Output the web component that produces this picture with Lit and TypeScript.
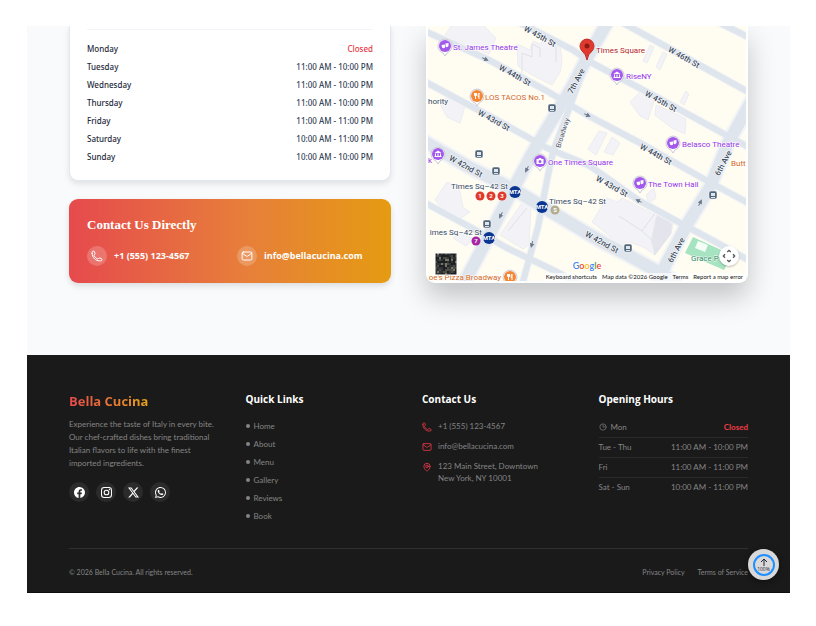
import { LitElement, html, css, svg } from "lit";
import { customElement } from "lit/decorators.js";

const handset = svg`<path d="M2.25 6.75c0 8.284 6.716 15 15 15h2.25a2.25 2.25 0 0 0 2.25-2.25v-1.372c0-.516-.351-.966-.852-1.091l-4.423-1.106c-.44-.11-.902.055-1.173.417l-.97 1.293c-.282.376-.769.542-1.21.38a12.035 12.035 0 0 1-7.143-7.143c-.162-.441.004-.928.38-1.21l1.293-.97c.363-.271.527-.734.417-1.173L6.963 3.102a1.125 1.125 0 0 0-1.091-.852H4.5A2.25 2.25 0 0 0 2.25 4.5v2.25Z"/>`;
const envelope = svg`<rect x="2.25" y="4" width="19.5" height="16" rx="2.25"/><path d="m2.5 6.5 8.3 5.8a2.2 2.2 0 0 0 2.4 0l8.3-5.8"/>`;
const pin = svg`<path d="M15 10.5a3 3 0 1 1-6 0 3 3 0 0 1 6 0Z"/><path d="M19.5 10.5c0 7.142-7.5 11.25-7.5 11.25S4.500 17.642 4.500 10.500a7.500 7.500 0 1 1 15 0Z"/>`;
const clock = svg`<circle cx="12" cy="12" r="9.500"/><path d="M12 6v6h4.500"/>`;

const lineIcon = (shape: unknown) => html`
  <svg class="line-icon" viewBox="0 0 24 24" aria-hidden="true">${shape}</svg>`;

const facebook = svg`<path d="M16 8.049c0-4.446-3.582-8.050-8-8.050C3.580 0-.002 3.603-.002 8.050c0 4.017 2.926 7.347 6.750 7.951v-5.625h-2.030V8.050H6.750V6.275c0-2.017 1.195-3.131 3.022-3.131.876 0 1.791.157 1.791.157v1.980h-1.009c-.993 0-1.303.621-1.303 1.258v1.510h2.218l-.354 2.326H9.250V16c3.824-.604 6.750-3.934 6.750-7.951"/>`;
const instagram = svg`<g fill="none" stroke="currentColor" stroke-width="1.5"><rect x=".75" y=".75" width="14.5" height="14.5" rx="4"/><circle cx="8" cy="8" r="3.400"/></g><circle cx="12.300" cy="3.700" r="1"/>`;
const xLogo = svg`<path d="M12.600.750h2.454l-5.360 6.142L16 15.250h-4.937l-3.867-5.070-4.425 5.070H.316l5.733-6.570L0 .750h5.063l3.495 4.633L12.601.750Zm-.860 13.028h1.360L4.323 2.145H2.865z"/>`;
const whatsapp = svg`<path d="M13.601 2.326A7.850 7.850 0 0 0 7.994 0C3.627 0 .068 3.558.064 7.926c0 1.399.366 2.760 1.057 3.965L0 16l4.204-1.102a7.900 7.900 0 0 0 3.790.965h.004c4.368 0 7.926-3.558 7.930-7.930A7.900 7.900 0 0 0 13.600 2.326zM7.994 14.521a6.600 6.600 0 0 1-3.356-.920l-.240-.144-2.494.654.666-2.433-.156-.251a6.560 6.560 0 0 1-1.007-3.505c0-3.626 2.957-6.584 6.591-6.584a6.560 6.560 0 0 1 4.660 1.931 6.560 6.560 0 0 1 1.928 4.660c-.004 3.639-2.961 6.592-6.592 6.592m3.615-4.934c-.197-.099-1.170-.578-1.353-.646-.182-.065-.315-.099-.445.099-.133.197-.513.646-.627.775-.114.133-.232.148-.430.050-.197-.100-.836-.308-1.592-.985-.590-.525-.985-1.175-1.103-1.372-.114-.198-.011-.304.088-.403.087-.088.197-.232.296-.346.100-.114.133-.198.198-.330.065-.134.034-.248-.015-.347-.050-.099-.445-1.076-.612-1.470-.160-.389-.323-.335-.445-.340-.114-.007-.247-.007-.380-.007a.730.730 0 0 0-.529.247c-.182.198-.691.677-.691 1.654s.710 1.916.810 2.049c.098.133 1.394 2.132 3.383 2.992.470.205.840.326 1.129.418.475.152.904.129 1.246.080.380-.058 1.171-.480 1.338-.943.164-.464.164-.860.114-.992-.049-.133-.182-.198-.380-.297"/>`;

/* ---- street map ---- */

const side = [
  "420,29 487,59 547,91 587,115 642,144 702,178 750,204",
  "498,12 538,32 573,50 592,63 662,100 750,148",
  "600,10 623,23 685,57 750,93",
  "700,13 750,38",
  "420,79 495,119 547,148 590,166 638,200 682,224 712,240 750,261",
  "420,200 483,234 507,248 553,270 580,284",
  "590,50 576,90 553,152 548,175 538,227 522,285",
];
const wide = [
  "420,139 467,166 515,190 543,207 602,242 628,255 680,284",
  "612,14 588,56 572,87 560,107 533,152 503,208 483,247 463,285",
  "752,100 728,143 710,187 685,228 655,285",
];
const buildings = [
  "518,66 517,44 530,50 533,41 540,44 548,36 560,43 562,62 560,72 552,85 532,75",
  "440,104 447,97 465,106 460,123 447,117",
  "440,42 452,25 482,24 496,38 489,54 470,46",
  "435,200 447,182 459,187 463,207 470,212 455,222",
  "453,238 460,232 474,239 466,246",
  "500,235 524,200 531,207 529,245 523,249",
  "592,222 607,198 617,202 622,198 673,224 671,234 655,255 645,248 630,242 620,244",
  "630,102 640,92 654,101 648,120 640,116",
  "656,105 672,112 686,119 685,134 672,128 655,115",
  "588,149 599,131 607,133 596,155",
  "604,152 612,137 620,143 613,155",
  "643,61 650,45 654,47 647,63",
  "656,67 663,52 667,54 660,70",
  "680,102 686,91 689,94 684,105",
  "646,195 654,188 656,198 649,203",
];

const streetNames: [string, number, number, number][] = [
  ["W 45th St", 540, 36, 29],
  ["W 46th St", 684, 57, 30],
  ["W 44th St", 515, 75, 29],
  ["W 45th St", 661, 101, 29],
  ["W 43rd St", 494, 120, 29],
  ["W 44th St", 656, 154, 29],
  ["W 42nd St", 466, 166, 29],
  ["W 43rd St", 612, 186, 29],
  ["W 42nd St", 602, 242, 29],
  ["7th Ave", 576, 81, -62],
  ["6th Ave", 723, 163, -62],
  ["6th Ave", 676, 250, -62],
];

const places: [string, number, number, string, string][] = [
  ["St. James Theatre", 453, 50, "violet", "start"],
  ["Times Square", 596, 53, "crimson", "start"],
  ["RiseNY", 626, 79, "violet", "start"],
  ["LOS TACOS No.1", 485, 100, "amber", "start"],
  ["Belasco Theatre", 682, 147, "violet", "start"],
  ["One Times Square", 548, 165, "violet", "start"],
  ["The Town Hall", 648, 187, "violet", "start"],
  ["Butt", 731, 166, "amber", "start"],
  ["oe's Pizza Broadway", 501, 280, "amber", "end"],
  ["Grace P", 691, 261, "green", "start"],
  ["hority", 428, 104, "slate", "start"],
  ["k", 428, 163, "violet", "start"],
  ["Times Sq–42 St", 451, 189, "slate", "start"],
  ["Times Sq–42 St", 549, 204, "slate", "start"],
  ["imes Sq–42 St", 482, 235, "slate", "end"],
];

const pins: [number, number, string, string][] = [
  [445, 46, "violet", "mask"],
  [617, 75, "violet", "hall"],
  [477, 96, "amber", "fork"],
  [673, 143, "violet", "mask"],
  [438, 154, "violet", "hall"],
  [540, 161, "violet", "camera"],
  [640, 183, "violet", "mask"],
  [510, 277, "amber", "fork"],
];

const glyphs: Record<string, unknown> = {
  mask: svg`<path fill="#fff" d="M-3.500 -1 0 -1.500V1.500Q-1.500 3-3 1.500ZM.5-2.500 3.500-3V0Q2 2 .5 .5Z"/>`,
  hall: svg`<path fill="#fff" d="M-3.500-1 0-3.500 3.500-1ZM-3-.5H-2V2H-3ZM-.5-.5H.5V2H-.5ZM2-.5H3V2H2ZM-3.500 2H3.500V3H-3.500Z"/>`,
  fork: svg`<path fill="none" stroke="#fff" d="M-2.500-3V-.5H-.5V-3M-1.500-3V3M2 3V-3Q.8-1.500 1 .5H2"/>`,
  camera: svg`<path fill="#fff" fill-rule="evenodd" d="M-3.500-2H-1.500L-1-3H1L1.500-2H3.500V3H-3.500ZM1.500 .5A1.500 1.500 0 1 0-1.500 .5 1.500 1.500 0 1 0 1.500 .5"/>`,
};

const stations = [[552, 108], [479, 154], [496, 171], [487, 224], [713, 195], [628, 248]];
const hubs = [[515, 192], [542, 207], [489, 238]];
const trains: [string, number, number, string][] = [
  ["1", 480, 196, "#e0392d"],
  ["2", 491, 196, "#e0392d"],
  ["3", 502, 196, "#e0392d"],
  ["7", 476, 241, "#a626a4"],
  ["S", 555, 210, "#b3ad8f"],
];
const arrows = [[485, 59, 25], [587, 115, 25], [527, 169, 118], [501, 215, 118], [532, 244, 105], [639, 201, 207], [700, 203, -62]];

const speckles = Array.from({ length: 121 }, (_, i) => {
  const tone = (i * i * 37 + i * 91 + ((i * 7) % 11) * 23) % 97;
  return svg`<rect x=${435 + (i % 11) * 2} y=${253 + Math.floor(i / 11) * 2} width="2" height="2"
    fill=${tone > 86 ? "#77756a" : tone > 64 ? "#4a4b45" : tone > 34 ? "#303234" : "#1d2022"} />`;
});

@customElement("street-map")
class StreetMap extends LitElement {
  static styles = css`
    :host { display: block; position: relative; font-family: Roboto, "Liberation Sans", sans-serif; }
    .canvas { display: block; width: 100%; background: #fffdf1; }
    .edge { fill: none; stroke: #f1f3f6; }
    .road { fill: none; stroke: #dfe5ed; }
    .narrow.edge { stroke-width: 8; }
    .narrow.road { stroke-width: 6; }
    .broad.edge { stroke-width: 16; }
    .broad.road { stroke-width: 12; }
    .building { fill: #f3f3f7; stroke: #ececf2; }
    .street { font-size: 8px; font-weight: 500; fill: #3e4e61; text-anchor: middle; }
    .place { font-size: 8px; }
    .street, .place { paint-order: stroke; stroke: #fff; stroke-width: 1px; }
    .minor { font-size: 7px; font-weight: 400; }
    .violet { fill: #9334e6; }
    .amber { fill: #d2691e; }
    .crimson { fill: #b3261e; }
    .green { fill: #2b8a5b; }
    .slate { fill: #35495e; }
    .dot.violet { fill: #a259ec; }
    .dot.amber { fill: #f58634; }
    .badge { font-size: 6px; font-weight: 700; fill: #fff; text-anchor: middle; }
    .legal {
      position: absolute; right: 0; bottom: 0; display: flex; gap: 5px;
      padding: 0 3px 0 2px; font: 6px/8px Lato, sans-serif;
      background: rgba(255, 255, 255, 0.7); color: #111; white-space: nowrap;
    }
    .legal a, .legal button {
      all: unset; cursor: pointer; color: #111;
    }
    .google {
      position: absolute; left: 50%; bottom: 9px; transform: translateX(-50%);
      font: 600 9px/12px Lato, sans-serif; text-shadow: 0 0 1px #fff;
    }
    .blue { color: #4285f4; }
    .red { color: #ea4335; }
    .yellow { color: #fbbc05; }
    .lime { color: #34a853; }
    .camera {
      position: absolute; right: 7px; bottom: 15px; width: 20px; height: 20px;
      border: 0; padding: 0; border-radius: 50%; background: #fff;
      display: grid; place-items: center;
      box-shadow: 0 1px 2px rgba(0, 0, 0, 0.25);
    }
    .camera svg { width: 14px; height: 14px; fill: none; stroke: #555; stroke-width: 1.5; }
  `;

  render() {
    return html`
      <svg class="canvas" viewBox="428 26 318 255" role="img" aria-label="Map of Times Square">
        ${buildings.map((p) => svg`<polygon class="building" points=${p} />`)}
        <path d="M522 73V53l10 4V44l8 4v9M547 40l9 5v17M508 231l19-23M619 216l23 15 14-19M655 255l-2-14 18-11M642 231l11 10" fill="none" stroke="#dfdfe9"/>
        <polygon points="656,217 660,212 672,224 671,234 655,255 651,241" fill="#e4e4ec"/>
        <polygon points="693,237 732,255 724,270 685,253" fill="#a6e3c0"/>
        <polygon points="698,241 708,245 705,252 695,248" fill="#f5fff8"/>
        ${side.map((p) => svg`<polyline class="narrow edge" points=${p} />`)}
        ${wide.map((p) => svg`<polyline class="broad edge" points=${p} />`)}
        ${side.map((p) => svg`<polyline class="narrow road" points=${p} />`)}
        ${wide.map((p) => svg`<polyline class="broad road" points=${p} />`)}
        ${arrows.map(([x, y, a]) => svg`<path transform="translate(${x} ${y}) rotate(${a})" d="M-3 0H2M0-1.500 3 0 0 1.500Z" fill="#6d7b8c" stroke="#6d7b8c"/>`)}
        ${streetNames.map(([t, x, y, a]) => svg`<text class="street" transform="translate(${x} ${y}) rotate(${a})" y="3">${t}</text>`)}
        <text class="street minor" transform="translate(563 133) rotate(-72)" y="2">Broadway</text>
        ${stations.map(([x, y]) => svg`<g transform="translate(${x} ${y})"><rect x="-4" y="-4" width="8" height="8" rx="2" fill="#526679" stroke="#fff" stroke-width=".5"/><rect x="-2" y="-2" width="4" height="3" fill="#dfe6ee"/><path d="M-2 2.500H2" stroke="#dfe6ee"/></g>`)}
        ${pins.map(([x, y, c, g]) => svg`<g transform="translate(${x} ${y})">
          <path d="M0 10Q-1 7-5 5A7 7 0 1 1 5 5Q1 7 0 10Z" fill="#fff" stroke="#c9c9d4"/>
          <circle class="dot ${c}" r="6"/>${glyphs[g]}</g>`)}
        <path d="M587 60Q586 54 582 51A7 7 0 1 1 592 51Q588 54 587 60Z" fill="#e03a2f" stroke="#bd2c24"/>
        <circle cx="587" cy="46" r="2.500" fill="#8c1a14"/>
        ${hubs.map(([x, y]) => svg`<circle cx=${x} cy=${y} r="6" fill="#0a3590"/><text class="badge" x=${x} y=${y + 2}>MTA</text>`)}
        ${trains.map(([t, x, y, c]) => svg`<circle cx=${x} cy=${y} r="4.500" fill=${c}/><text class="badge" x=${x} y=${y + 2}>${t}</text>`)}
        ${places.map(([t, x, y, c, a]) => svg`<text class="place ${c}" x=${x} y=${y} text-anchor=${a}>${t}</text>`)}
        ${speckles}
        <rect x="435" y="253" width="22" height="22" rx="1" fill="none" stroke="#fff"/>
      </svg>
      <div class="google" aria-label="Google"><span class="blue">G</span><span class="red">o</span><span class="yellow">o</span><span class="blue">g</span><span class="lime">l</span><span class="red">e</span></div>
      <button class="camera" aria-label="Map camera controls">
        <svg viewBox="0 0 16 16"><path d="m6 3.500 2-2 2 2M6 12.500l2 2 2-2M3.500 6l-2 2 2 2M12.500 6l2 2-2 2"/></svg>
      </button>
      <div class="legal">
        <button>Keyboard shortcuts</button>
        <span>Map data ©2026 Google</span>
        <a href="#terms">Terms</a>
        <a href="#report">Report a map error</a>
      </div>`;
  }
}

/* ---- page ---- */

const week = [
  ["Monday", "Closed"],
  ["Tuesday", "11:00 AM - 10:00 PM"],
  ["Wednesday", "11:00 AM - 10:00 PM"],
  ["Thursday", "11:00 AM - 10:00 PM"],
  ["Friday", "11:00 AM - 11:00 PM"],
  ["Saturday", "10:00 AM - 11:00 PM"],
  ["Sunday", "10:00 AM - 10:00 PM"],
];
const summary = [
  ["Mon", "Closed"],
  ["Tue - Thu", "11:00 AM - 10:00 PM"],
  ["Fri", "11:00 AM - 11:00 PM"],
  ["Sat - Sun", "10:00 AM - 11:00 PM"],
];
const links = ["Home", "About", "Menu", "Gallery", "Reviews", "Book"];
const socials: [string, unknown][] = [
  ["Facebook", facebook],
  ["Instagram", instagram],
  ["X", xLogo],
  ["WhatsApp", whatsapp],
];

@customElement("app-root")
class AppRoot extends LitElement {
  static styles = css`
    :host {
      display: block; padding: 26px 26px 33px 27px; background: #fff;
      font: 8px/12px Lato, "Open Sans", sans-serif;
    }
    * { box-sizing: border-box; }
    h2, h3, p, ul { margin: 0; padding: 0; }
    ul { list-style: none; }
    a { color: inherit; text-decoration: none; }
    table { width: 100%; border-collapse: collapse; }
    th, td { padding: 0; font-weight: inherit; }
    th { text-align: left; }
    td { text-align: right; }
    .shell { position: relative; }
    .visit {
      display: grid; grid-template-columns: repeat(2, minmax(0, 1fr)); gap: 35px;
      padding: 0 42px 72px; background: #f8fafc; overflow: hidden;
    }
    .stack { display: flex; flex-direction: column; gap: 18px; }
    .hours {
      padding: 3px 17px 14px; background: #fff; border-radius: 0 0 9px 9px;
      border: solid #e2e8f0; border-width: 0 1px 1px;
      box-shadow: 0 3px 6px rgba(0, 0, 0, 0.1);
      font: 500 8px/12px "Noto Sans", sans-serif; color: #1e293b;
    }
    .hours table { border-top: 1px solid #f1f5f9; border-collapse: separate; border-spacing: 0; padding-top: 10px; }
    .hours tr { height: 18px; }
    .hours td { color: #334155; }
    .hours .closed { color: #e63946; }
    .direct {
      padding: 18px 18px 17px; border-radius: 9px; color: #fff;
      background: linear-gradient(90deg, #e64a4d, #e77f3a 55%, #e59b12);
      box-shadow: 0 3px 6px rgba(0, 0, 0, 0.12);
    }
    .direct h2 { font: 700 13px/16px "Liberation Serif", serif; margin-bottom: 13px; }
    .ways { display: grid; grid-template-columns: 1fr 1fr; gap: 14px; }
    .way { display: flex; align-items: center; gap: 7px; font: 700 9px/12px "Open Sans", sans-serif; }
    .bubble {
      width: 20px; height: 20px; border-radius: 50%;
      background: rgba(255, 255, 255, 0.2); display: grid; place-items: center;
    }
    .line-icon { width: 10px; height: 10px; flex: none; fill: none; stroke: currentColor; stroke-width: 2; stroke-linecap: round; stroke-linejoin: round; }
    .bubble .line-icon { width: 12px; height: 12px; }
    .frame {
      align-self: start; overflow: hidden; background: #fff;
      padding: 0 2px 2px; border-radius: 0 0 9px 9px;
      box-shadow: 0 14px 28px rgba(0, 0, 0, 0.22);
    }
    .footer { padding: 37px 42px 14px; background: #1a1a1a; color: #858585; border-bottom: 1px solid #0d0d0d; }
    .columns { display: grid; grid-template-columns: repeat(4, minmax(0, 1fr)); gap: 27px; min-height: 156px; }
    .columns h3 { font: 700 10px/14px "Open Sans", sans-serif; color: #fff; margin-bottom: 11px; }
    .brand {
      width: max-content; font: 700 13px/18px "Open Sans", sans-serif;
      background: linear-gradient(90deg, #e64a4d, #e8a01c);
      background-clip: text; -webkit-background-clip: text; color: transparent;
    }
    .blurb { margin-top: 8px; line-height: 13px; white-space: nowrap; }
    .social { display: flex; gap: 7px; margin-top: 12px; }
    .social a { width: 20px; height: 20px; border-radius: 50%; background: #2b2b2b; color: #fff; display: grid; place-items: center; }
    .social svg { width: 11px; height: 11px; fill: currentColor; }
    .links a { display: flex; align-items: center; gap: 4px; line-height: 18px; }
    .links a::before { content: ""; width: 4px; height: 4px; border-radius: 50%; background: #858585; }
    .reach { display: flex; flex-direction: column; gap: 8px; padding-top: 3px; }
    .reach li { display: flex; gap: 6px; white-space: nowrap; }
    .reach .line-icon { color: #e63946; margin-top: 2px; }
    .brief tr { height: 20px; }
    .brief tr + tr { border-top: 1px solid #2a2a2a; }
    .brief .line-icon { width: 8px; height: 8px; margin-right: 4px; vertical-align: -1px; }
    .brief .closed { color: #ef3b45; font-weight: 700; }
    .base { display: flex; justify-content: space-between; padding-top: 17px; border-top: 1px solid #303030; font-size: 7px; }
    .policies { display: flex; gap: 13px; }
    .to-top {
      position: absolute; right: 11px; bottom: 13px; width: 31px; height: 31px;
      padding: 0; border: 0; border-radius: 50%; background: #d9d9d9;
      display: grid; place-items: center; box-shadow: 0 2px 6px rgba(0, 0, 0, 0.4);
    }
    .ring {
      width: 22px; height: 22px; border: 2px solid #1e90ff; border-radius: 50%;
      display: flex; flex-direction: column; align-items: center; justify-content: center;
      font: 500 5px/6px "Open Sans", sans-serif; color: #223;
    }
    .ring svg { width: 8px; height: 8px; fill: none; stroke: currentColor; stroke-width: 1; }
  `;

  render() {
    return html`
      <div class="shell">
        <section class="visit">
          <div class="stack">
            <div class="hours">
              <table>
                ${week.map(([day, time]) => html`<tr><th scope="row">${day}</th><td class=${time === "Closed" ? "closed" : ""}>${time}</td></tr>`)}
              </table>
            </div>
            <div class="direct">
              <h2>Contact Us Directly</h2>
              <div class="ways">
                <a class="way" href="tel:+15551234567"><span class="bubble">${lineIcon(handset)}</span>+1 (555) 123-4567</a>
                <a class="way" href="mailto:info@bellacucina.com"><span class="bubble">${lineIcon(envelope)}</span>info@bellacucina.com</a>
              </div>
            </div>
          </div>
          <div class="frame"><street-map></street-map></div>
        </section>
        <footer class="footer">
          <div class="columns">
            <div>
              <h2 class="brand">Bella Cucina</h2>
              <p class="blurb">Experience the taste of Italy in every bite.<br>Our chef-crafted dishes bring traditional<br>Italian flavors to life with the finest<br>imported ingredients.</p>
              <div class="social">
                ${socials.map(([name, shape]) => html`<a href="#${name}" aria-label=${name}><svg viewBox="0 0 16 16">${shape}</svg></a>`)}
              </div>
            </div>
            <div>
              <h3>Quick Links</h3>
              <ul class="links">${links.map((l) => html`<li><a href="#${l}">${l}</a></li>`)}</ul>
            </div>
            <div>
              <h3>Contact Us</h3>
              <ul class="reach">
                <li>${lineIcon(handset)}<a href="tel:+15551234567">+1 (555) 123-4567</a></li>
                <li>${lineIcon(envelope)}<a href="mailto:info@bellacucina.com">info@bellacucina.com</a></li>
                <li>${lineIcon(pin)}<span>123 Main Street, Downtown<br>New York, NY 10001</span></li>
              </ul>
            </div>
            <div>
              <h3>Opening Hours</h3>
              <table class="brief">
                ${summary.map(([day, time], i) => html`<tr><th scope="row">${i === 0 ? lineIcon(clock) : ""}${day}</th><td class=${time === "Closed" ? "closed" : ""}>${time}</td></tr>`)}
              </table>
            </div>
          </div>
          <div class="base">
            <span>© 2026 Bella Cucina. All rights reserved.</span>
            <div class="policies"><a href="#privacy">Privacy Policy</a><a href="#service">Terms of Service</a></div>
          </div>
        </footer>
        <button class="to-top" aria-label="Back to top, 100% scrolled">
          <span class="ring"><svg viewBox="0 0 8 8"><path d="M4 8V1M1 4l3-3 3 3"/></svg>100%</span>
        </button>
      </div>`;
  }
}
